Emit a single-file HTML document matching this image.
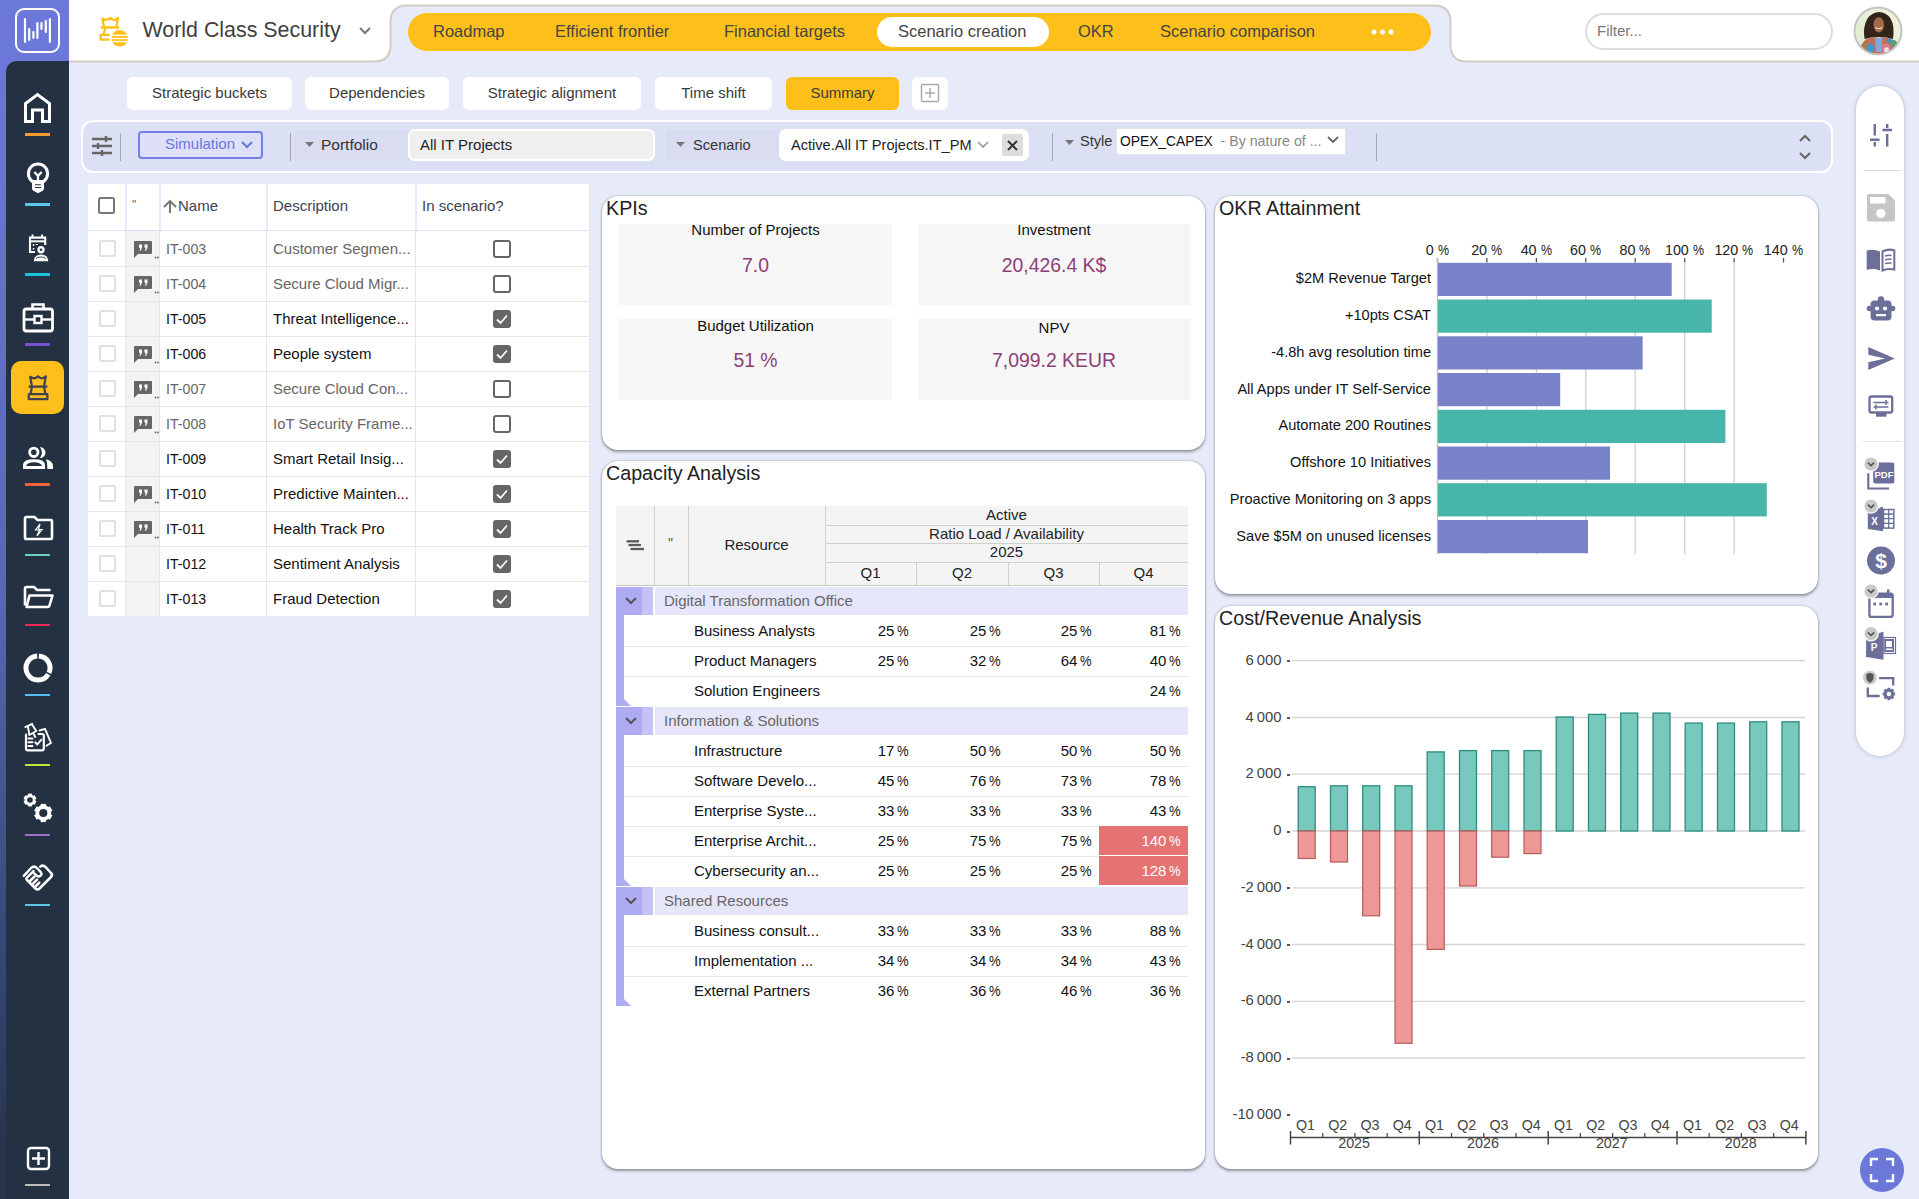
<!DOCTYPE html>
<html><head><meta charset="utf-8">
<style>
*{box-sizing:border-box;margin:0;padding:0}
html,body{width:1919px;height:1199px;overflow:hidden}
body{background:#e7eaf9;font-family:"Liberation Sans",sans-serif;color:#333;position:relative}
.a{position:absolute}
.c{display:flex;align-items:center;justify-content:center}
#sbL{left:0;top:0;width:69px;height:1199px;background:linear-gradient(#6b77d9 0,#6b77d9 61px,#6470c8 300px,#5a66b0 600px,#3d4b7c 900px,#34426e 1000px,#2b3a58 1100px,#27344a 1150px)}
#sbD{left:6px;top:61px;width:63px;height:1138px;background:#243142;border-top-left-radius:11px}
.und{position:absolute;left:28px;width:21px;height:3px;border-radius:1px}
.tab{position:absolute;top:12.3px;height:38px;font-size:16.5px;color:#444;line-height:38px}
.sub{position:absolute;top:77px;height:33px;background:#fff;border-radius:6px;font-size:15px;color:#3a3a3a;display:flex;align-items:center;justify-content:center;padding-bottom:2px}

.hd{font-size:15px;line-height:20px;color:#3d4252;white-space:nowrap}
.rt{font-size:15px;line-height:20px;white-space:nowrap}

.card{background:#fff;border-radius:16px;box-shadow:0 1.2px 3px rgba(0,0,0,.36),0 0 2px rgba(0,0,0,.22)}
.ctitle{font-size:19.7px;line-height:24px;color:#222;white-space:nowrap}
.kl{font-size:15px;line-height:20px;color:#111;text-align:center;white-space:nowrap}
.kv{font-size:19.4px;line-height:24px;color:#8e3f78;text-align:center;white-space:nowrap}
.th{font-size:15px;line-height:20px;color:#222;text-align:center;white-space:nowrap}
.gt{font-size:15px;line-height:20px;color:#666;white-space:nowrap}
.pcw{display:inline-block;width:11.6px;text-align:left}.pc{display:inline-block;transform:scaleX(.87);transform-origin:0 0}

.ax{font-size:14.3px;line-height:20px;color:#222;white-space:nowrap}
</style></head><body>
<!-- left sidebar -->
<div id="sbL" class="a"></div>
<div id="sbD" class="a"></div>
<div class="a" style="left:15px;top:8px;width:45px;height:45px;border:2.5px solid #fff;border-radius:9px"></div>
<svg class="a" style="left:0;top:0" width="69" height="60"><g stroke="#fff" stroke-width="2.2" stroke-linecap="round">
<line x1="25" y1="19" x2="25" y2="42"/><line x1="29.2" y1="29" x2="29.2" y2="40"/><line x1="33.4" y1="32" x2="33.4" y2="38"/><line x1="37.4" y1="23" x2="37.4" y2="38"/><line x1="41.5" y1="23" x2="41.5" y2="29"/><line x1="45.8" y1="21" x2="45.8" y2="32"/><line x1="49.9" y1="19" x2="49.9" y2="42"/></g></svg>

<!-- header -->
<div class="a" style="left:69px;top:0;width:1850px;height:61px;background:#fff"></div>
<svg class="a" style="left:0;top:0" width="1919" height="70">
<path d="M374,61.5 Q390.5,61.5 390.5,45 V22 Q390.5,5.5 407,5.5 H1434 Q1450.5,5.5 1450.5,22 V45 Q1450.5,61.5 1467,61.5 Z" fill="#e7eaf9"/>
<path d="M69,61.5 H374 Q390.5,61.5 390.5,45 V22 Q390.5,5.5 407,5.5 H1434 Q1450.5,5.5 1450.5,22 V45 Q1450.5,61.5 1467,61.5 H1919" fill="none" stroke="#d2ccc4" stroke-width="2"/>
</svg>
<!-- title -->
<svg class="a" style="left:96px;top:14px" width="36" height="36" viewBox="0 0 36 36">
<g fill="none" stroke="#fdc01b" stroke-width="2.3" stroke-linejoin="round"><path d="M6.2,3.9 Q10.2,7.8 14.2,3.9 Q18,7.8 21.9,3.9 L20.3,13.5 M6.2,3.9 L8.2,13.5 M4.8,13.5 H23.2 M9.4,14 L7.3,20.8 M13.8,20.8 H4.6 V25.6 H13.8"/></g>
<circle cx="23.7" cy="24.3" r="8.3" fill="#fdc01b"/><g stroke="#fff" stroke-width="1.3"><line x1="16.5" y1="21.3" x2="30.9" y2="21.3"/><line x1="15.6" y1="24.5" x2="31.8" y2="24.5"/><line x1="16.5" y1="27.6" x2="30.9" y2="27.6"/></g>
</svg>
<div class="a" style="left:142.5px;top:16px;font-size:21.4px;color:#404040;line-height:28px;white-space:nowrap">World Class Security</div>
<svg class="a" style="left:358px;top:26px" width="14" height="10"><path d="M2,2 L7,7 L12,2" fill="none" stroke="#777" stroke-width="2"/></svg>

<!-- tabs -->
<div class="a" style="left:408px;top:13px;width:1023px;height:38px;background:#fdc01b;border-radius:19px"></div>
<div class="a" style="left:877px;top:17px;width:172px;height:30px;background:#fff;border-radius:15px"></div>
<div class="tab" style="left:433px">Roadmap</div>
<div class="tab" style="left:555px">Efficient frontier</div>
<div class="tab" style="left:724px">Financial targets</div>
<div class="tab" style="left:898px">Scenario creation</div>
<div class="tab" style="left:1078px">OKR</div>
<div class="tab" style="left:1160px">Scenario comparison</div>
<svg class="a" style="left:1370px;top:27px" width="26" height="10"><circle cx="4" cy="5" r="2.5" fill="#fff"/><circle cx="12.5" cy="5" r="2.5" fill="#fff"/><circle cx="21" cy="5" r="2.5" fill="#fff"/></svg>

<!-- filter + avatar -->
<div class="a" style="left:1585px;top:13px;width:248px;height:37px;border:2px solid #ddd;border-radius:19px;background:#fff"></div>
<div class="a" style="left:1597px;top:21px;font-size:15px;color:#777;line-height:20px">Filter...</div>
<svg class="a" style="left:1853px;top:6px" width="50" height="50" viewBox="0 0 50 50"><defs><clipPath id="avc"><circle cx="25" cy="25" r="23"/></clipPath><linearGradient id="avg" x1="0" y1="1" x2="1" y2="0"><stop offset="0" stop-color="#d8ecd0"/><stop offset="1" stop-color="#f4f4dc"/></linearGradient></defs>
<g clip-path="url(#avc)"><rect width="50" height="50" fill="url(#avg)"/>
<path d="M11.5,33 Q9.5,21 14.5,12.5 Q19.5,6 26,6 Q33,6 37.5,12.5 Q42,20 40,33 Q33,31 26,31 Q18,31 11.5,33 Z" fill="#33241a"/>
<ellipse cx="25.8" cy="18.8" rx="5.3" ry="7.6" fill="#a36a48"/><path d="M22.5,21.5 Q25.8,24 29,21.5" stroke="#f0e0d0" stroke-width="1.2" fill="none"/>
<path d="M6,50 Q7,37 13.5,33 Q20,30 25.8,32 Q32,30 38.5,33 Q45,37 46,50 Z" fill="#c07058"/>
<path d="M22,32 L29.5,32 L28.5,46 L23,46 Z" fill="#82a8d8"/><ellipse cx="17.5" cy="42" rx="3.8" ry="4.6" fill="#3a9ad8"/><ellipse cx="33" cy="43" rx="4.5" ry="5.5" fill="#e07a9a"/><ellipse cx="33.5" cy="44" rx="2.3" ry="2.8" fill="#eee8d8"/><ellipse cx="40.5" cy="37.5" rx="3.5" ry="3.5" fill="#5aa070"/><ellipse cx="11.5" cy="41" rx="2.8" ry="4.5" fill="#b07a40"/><ellipse cx="36" cy="34.5" rx="2.5" ry="2" fill="#4a90c8"/></g>
<circle cx="25" cy="25" r="23.5" fill="none" stroke="#c4c4c4" stroke-width="2"/></svg>

<!-- subtabs -->
<div class="sub" style="left:127px;width:165px">Strategic buckets</div>
<div class="sub" style="left:305px;width:144px">Dependencies</div>
<div class="sub" style="left:463px;width:178px">Strategic alignment</div>
<div class="sub" style="left:655px;width:117px">Time shift</div>
<div class="sub" style="left:786px;width:113px;background:#fdc01b">Summary</div>
<div class="sub" style="left:912px;width:36px"><svg width="20" height="20"><rect x="1.5" y="1.5" width="17" height="17" fill="none" stroke="#aaa" stroke-width="1.5" rx="1"/><path d="M10,5 V15 M5,10 H15" stroke="#aaa" stroke-width="1.5"/></svg></div>


<!-- filter bar -->
<div class="a" style="left:81px;top:120px;width:1752px;height:53px;background:#dce0f5;border:2px solid #fff;border-radius:12px"></div>
<svg class="a" style="left:90px;top:134px" width="24" height="24" viewBox="0 0 24 24"><g stroke="#666" stroke-width="2.4" fill="none">
<path d="M2,5 H22 M2,12 H22 M2,19 H22"/></g><g stroke="#666" stroke-width="2.4"><path d="M16,2 V8 M8,9 V15 M12,16 V22"/></g></svg>
<div class="a" style="left:120px;top:133px;width:1px;height:28px;background:#a4a6b8"></div>
<div class="a" style="left:138px;top:131px;width:125px;height:28px;border:2px solid #7480e6;border-radius:4px;background:#dde0f8"></div>
<div class="a" style="left:165px;top:134px;font-size:15px;line-height:20px;color:#6b78da">Simulation</div>
<svg class="a" style="left:240px;top:140px" width="14" height="10"><path d="M2,2 L7,7 L12,2" fill="none" stroke="#6b78da" stroke-width="2"/></svg>
<div class="a" style="left:290px;top:133px;width:1px;height:28px;background:#a4a6b8"></div>
<div class="a" style="left:295px;top:131px;width:115px;height:29px;border:1px solid #d6d9ec;background:#dadcf2"></div>
<svg class="a" style="left:305px;top:142px" width="10" height="6"><path d="M0,0 H9 L4.5,5 Z" fill="#777"/></svg>
<div class="a" style="left:321px;top:135px;font-size:15.5px;line-height:20px;color:#333">Portfolio</div>
<div class="a" style="left:408px;top:129px;width:247px;height:32px;border:2px solid #fff;border-radius:7px;background:#efefef"></div>
<div class="a" style="left:420px;top:135px;font-size:15px;line-height:20px;color:#222">All IT Projects</div>

<div class="a" style="left:667px;top:131px;width:113px;height:29px;border:1px solid #d6d9ec;background:#dadcf2"></div>
<svg class="a" style="left:676px;top:142px" width="10" height="6"><path d="M0,0 H9 L4.5,5 Z" fill="#777"/></svg>
<div class="a" style="left:693px;top:135px;font-size:14.6px;line-height:20px;color:#333">Scenario</div>
<div class="a" style="left:779px;top:129px;width:250px;height:32px;border-radius:7px;background:#fff"></div>
<div class="a" style="left:791px;top:135px;font-size:14.6px;line-height:20px;color:#222;width:182px;overflow:hidden;white-space:nowrap">Active.All IT Projects.IT_PM</div>
<svg class="a" style="left:976px;top:140px" width="14" height="10"><path d="M2,2 L7,7 L12,2" fill="none" stroke="#999" stroke-width="1.6"/></svg>
<div class="a" style="left:1002px;top:134px;width:21px;height:22px;background:#ddd;border-radius:2px"></div>
<svg class="a" style="left:1006px;top:139px" width="13" height="13"><path d="M2,2 L11,11 M11,2 L2,11" stroke="#333" stroke-width="2"/></svg>
<div class="a" style="left:1052px;top:133px;width:1px;height:28px;background:#a4a6b8"></div>
<svg class="a" style="left:1065px;top:140px" width="10" height="6"><path d="M0,0 H9 L4.5,5 Z" fill="#777"/></svg>
<div class="a" style="left:1080px;top:131px;font-size:14.6px;line-height:20px;color:#333">Style</div>
<div class="a" style="left:1116px;top:128px;width:230px;height:27px;border:1px solid #e4e4e4;background:#fff"></div>
<div class="a" style="left:1120px;top:131px;font-size:13.8px;line-height:20px;color:#111;white-space:nowrap">OPEX_CAPEX <span style="color:#888;font-size:14.2px">&nbsp;- By nature of ...</span></div>
<svg class="a" style="left:1326px;top:135px" width="14" height="10"><path d="M2,2 L7,7 L12,2" fill="none" stroke="#666" stroke-width="1.8"/></svg>
<div class="a" style="left:1376px;top:133px;width:1px;height:28px;background:#a4a6b8"></div>
<svg class="a" style="left:1797px;top:133px" width="16" height="28"><path d="M3,8 L8,3 L13,8 M3,20 L8,25 L13,20" fill="none" stroke="#666" stroke-width="2"/></svg>

<div class="a" style="left:88px;top:184px;width:501px;height:47px;background:#fff"></div>
<div class="a" style="left:88px;top:230px;width:501px;height:1.5px;background:#dfe3f8"></div>
<div class="a" style="left:125px;top:184px;width:1.5px;height:46px;background:#e6e9fb"></div>
<div class="a" style="left:159px;top:184px;width:1.5px;height:46px;background:#e6e9fb"></div>
<div class="a" style="left:266px;top:184px;width:1.5px;height:46px;background:#e6e9fb"></div>
<div class="a" style="left:415px;top:184px;width:1.5px;height:46px;background:#e6e9fb"></div>
<div class="a" style="left:98px;top:197px;width:17px;height:17px;border:2.5px solid #777;border-radius:2.5px"></div>
<div class="a" style="left:132px;top:199px;font-size:12px;line-height:12px;color:#667">"</div>
<svg class="a" style="left:162px;top:198px" width="16" height="16"><path d="M8,15 V3 M2,9 L8,3 L14,9" fill="none" stroke="#777" stroke-width="2"/></svg>
<div class="a hd" style="left:178px;top:196px">Name</div>
<div class="a hd" style="left:273px;top:196px">Description</div>
<div class="a hd" style="left:422px;top:196px">In scenario?</div>
<div class="a" style="left:88px;top:231px;width:501px;height:385px;background:#fff"></div>
<div class="a" style="left:125px;top:231px;width:34px;height:385px;background:#f3f3f3"></div>
<div class="a" style="left:99px;top:240px;width:17px;height:17px;border:2px solid #e0e0e0;border-radius:2px"></div>
<svg class="a" style="left:133px;top:240px" width="26" height="20" viewBox="0 0 26 20"><path d="M1.5,1 H18 Q19,1 19,2 V13 Q19,14 18,14 H5 L1,18 V2 Q1,1 2,1 Z" fill="#666"/><path d="M6,4.5 h3 v3.2 l-1.5,3 h-1 l0.8,-3 h-1.3 Z M11.5,4.5 h3 v3.2 l-1.5,3 h-1 l0.8,-3 h-1.3 Z" fill="#fff"/><circle cx="22.5" cy="17.5" r="0.9" fill="#666"/><circle cx="25" cy="17.5" r="0.9" fill="#666"/></svg>
<div class="a rt" style="left:166px;top:239px;color:#666;font-size:14.2px">IT-003</div>
<div class="a rt" style="left:273px;top:239px;color:#666">Customer Segmen...</div>
<div class="a" style="left:493px;top:240px;width:18px;height:18px;border:2.5px solid #666;border-radius:3px"></div>
<div class="a" style="left:88px;top:266px;width:501px;height:1.2px;background:#e6e6e6"></div>
<div class="a" style="left:99px;top:275px;width:17px;height:17px;border:2px solid #e0e0e0;border-radius:2px"></div>
<svg class="a" style="left:133px;top:275px" width="26" height="20" viewBox="0 0 26 20"><path d="M1.5,1 H18 Q19,1 19,2 V13 Q19,14 18,14 H5 L1,18 V2 Q1,1 2,1 Z" fill="#666"/><path d="M6,4.5 h3 v3.2 l-1.5,3 h-1 l0.8,-3 h-1.3 Z M11.5,4.5 h3 v3.2 l-1.5,3 h-1 l0.8,-3 h-1.3 Z" fill="#fff"/><circle cx="22.5" cy="17.5" r="0.9" fill="#666"/><circle cx="25" cy="17.5" r="0.9" fill="#666"/></svg>
<div class="a rt" style="left:166px;top:274px;color:#666;font-size:14.2px">IT-004</div>
<div class="a rt" style="left:273px;top:274px;color:#666">Secure Cloud Migr...</div>
<div class="a" style="left:493px;top:275px;width:18px;height:18px;border:2.5px solid #666;border-radius:3px"></div>
<div class="a" style="left:88px;top:301px;width:501px;height:1.2px;background:#e6e6e6"></div>
<div class="a" style="left:99px;top:310px;width:17px;height:17px;border:2px solid #e0e0e0;border-radius:2px"></div>
<div class="a rt" style="left:166px;top:309px;color:#111;font-size:14.2px">IT-005</div>
<div class="a rt" style="left:273px;top:309px;color:#111">Threat Intelligence...</div>
<svg class="a" style="left:493px;top:310px" width="18" height="18"><rect x="0" y="0" width="18" height="18" rx="3" fill="#666"/><path d="M4,9.5 L7.5,13 L14,5.5" fill="none" stroke="#fff" stroke-width="1.8"/></svg>
<div class="a" style="left:88px;top:336px;width:501px;height:1.2px;background:#e6e6e6"></div>
<div class="a" style="left:99px;top:345px;width:17px;height:17px;border:2px solid #e0e0e0;border-radius:2px"></div>
<svg class="a" style="left:133px;top:345px" width="26" height="20" viewBox="0 0 26 20"><path d="M1.5,1 H18 Q19,1 19,2 V13 Q19,14 18,14 H5 L1,18 V2 Q1,1 2,1 Z" fill="#666"/><path d="M6,4.5 h3 v3.2 l-1.5,3 h-1 l0.8,-3 h-1.3 Z M11.5,4.5 h3 v3.2 l-1.5,3 h-1 l0.8,-3 h-1.3 Z" fill="#fff"/><circle cx="22.5" cy="17.5" r="0.9" fill="#666"/><circle cx="25" cy="17.5" r="0.9" fill="#666"/></svg>
<div class="a rt" style="left:166px;top:344px;color:#111;font-size:14.2px">IT-006</div>
<div class="a rt" style="left:273px;top:344px;color:#111">People system</div>
<svg class="a" style="left:493px;top:345px" width="18" height="18"><rect x="0" y="0" width="18" height="18" rx="3" fill="#666"/><path d="M4,9.5 L7.5,13 L14,5.5" fill="none" stroke="#fff" stroke-width="1.8"/></svg>
<div class="a" style="left:88px;top:371px;width:501px;height:1.2px;background:#e6e6e6"></div>
<div class="a" style="left:99px;top:380px;width:17px;height:17px;border:2px solid #e0e0e0;border-radius:2px"></div>
<svg class="a" style="left:133px;top:380px" width="26" height="20" viewBox="0 0 26 20"><path d="M1.5,1 H18 Q19,1 19,2 V13 Q19,14 18,14 H5 L1,18 V2 Q1,1 2,1 Z" fill="#666"/><path d="M6,4.5 h3 v3.2 l-1.5,3 h-1 l0.8,-3 h-1.3 Z M11.5,4.5 h3 v3.2 l-1.5,3 h-1 l0.8,-3 h-1.3 Z" fill="#fff"/><circle cx="22.5" cy="17.5" r="0.9" fill="#666"/><circle cx="25" cy="17.5" r="0.9" fill="#666"/></svg>
<div class="a rt" style="left:166px;top:379px;color:#666;font-size:14.2px">IT-007</div>
<div class="a rt" style="left:273px;top:379px;color:#666">Secure Cloud Con...</div>
<div class="a" style="left:493px;top:380px;width:18px;height:18px;border:2.5px solid #666;border-radius:3px"></div>
<div class="a" style="left:88px;top:406px;width:501px;height:1.2px;background:#e6e6e6"></div>
<div class="a" style="left:99px;top:415px;width:17px;height:17px;border:2px solid #e0e0e0;border-radius:2px"></div>
<svg class="a" style="left:133px;top:415px" width="26" height="20" viewBox="0 0 26 20"><path d="M1.5,1 H18 Q19,1 19,2 V13 Q19,14 18,14 H5 L1,18 V2 Q1,1 2,1 Z" fill="#666"/><path d="M6,4.5 h3 v3.2 l-1.5,3 h-1 l0.8,-3 h-1.3 Z M11.5,4.5 h3 v3.2 l-1.5,3 h-1 l0.8,-3 h-1.3 Z" fill="#fff"/><circle cx="22.5" cy="17.5" r="0.9" fill="#666"/><circle cx="25" cy="17.5" r="0.9" fill="#666"/></svg>
<div class="a rt" style="left:166px;top:414px;color:#666;font-size:14.2px">IT-008</div>
<div class="a rt" style="left:273px;top:414px;color:#666">IoT Security Frame...</div>
<div class="a" style="left:493px;top:415px;width:18px;height:18px;border:2.5px solid #666;border-radius:3px"></div>
<div class="a" style="left:88px;top:441px;width:501px;height:1.2px;background:#e6e6e6"></div>
<div class="a" style="left:99px;top:450px;width:17px;height:17px;border:2px solid #e0e0e0;border-radius:2px"></div>
<div class="a rt" style="left:166px;top:449px;color:#111;font-size:14.2px">IT-009</div>
<div class="a rt" style="left:273px;top:449px;color:#111">Smart Retail Insig...</div>
<svg class="a" style="left:493px;top:450px" width="18" height="18"><rect x="0" y="0" width="18" height="18" rx="3" fill="#666"/><path d="M4,9.5 L7.5,13 L14,5.5" fill="none" stroke="#fff" stroke-width="1.8"/></svg>
<div class="a" style="left:88px;top:476px;width:501px;height:1.2px;background:#e6e6e6"></div>
<div class="a" style="left:99px;top:485px;width:17px;height:17px;border:2px solid #e0e0e0;border-radius:2px"></div>
<svg class="a" style="left:133px;top:485px" width="26" height="20" viewBox="0 0 26 20"><path d="M1.5,1 H18 Q19,1 19,2 V13 Q19,14 18,14 H5 L1,18 V2 Q1,1 2,1 Z" fill="#666"/><path d="M6,4.5 h3 v3.2 l-1.5,3 h-1 l0.8,-3 h-1.3 Z M11.5,4.5 h3 v3.2 l-1.5,3 h-1 l0.8,-3 h-1.3 Z" fill="#fff"/><circle cx="22.5" cy="17.5" r="0.9" fill="#666"/><circle cx="25" cy="17.5" r="0.9" fill="#666"/></svg>
<div class="a rt" style="left:166px;top:484px;color:#111;font-size:14.2px">IT-010</div>
<div class="a rt" style="left:273px;top:484px;color:#111">Predictive Mainten...</div>
<svg class="a" style="left:493px;top:485px" width="18" height="18"><rect x="0" y="0" width="18" height="18" rx="3" fill="#666"/><path d="M4,9.5 L7.5,13 L14,5.5" fill="none" stroke="#fff" stroke-width="1.8"/></svg>
<div class="a" style="left:88px;top:511px;width:501px;height:1.2px;background:#e6e6e6"></div>
<div class="a" style="left:99px;top:520px;width:17px;height:17px;border:2px solid #e0e0e0;border-radius:2px"></div>
<svg class="a" style="left:133px;top:520px" width="26" height="20" viewBox="0 0 26 20"><path d="M1.5,1 H18 Q19,1 19,2 V13 Q19,14 18,14 H5 L1,18 V2 Q1,1 2,1 Z" fill="#666"/><path d="M6,4.5 h3 v3.2 l-1.5,3 h-1 l0.8,-3 h-1.3 Z M11.5,4.5 h3 v3.2 l-1.5,3 h-1 l0.8,-3 h-1.3 Z" fill="#fff"/><circle cx="22.5" cy="17.5" r="0.9" fill="#666"/><circle cx="25" cy="17.5" r="0.9" fill="#666"/></svg>
<div class="a rt" style="left:166px;top:519px;color:#111;font-size:14.2px">IT-011</div>
<div class="a rt" style="left:273px;top:519px;color:#111">Health Track Pro</div>
<svg class="a" style="left:493px;top:520px" width="18" height="18"><rect x="0" y="0" width="18" height="18" rx="3" fill="#666"/><path d="M4,9.5 L7.5,13 L14,5.5" fill="none" stroke="#fff" stroke-width="1.8"/></svg>
<div class="a" style="left:88px;top:546px;width:501px;height:1.2px;background:#e6e6e6"></div>
<div class="a" style="left:99px;top:555px;width:17px;height:17px;border:2px solid #e0e0e0;border-radius:2px"></div>
<div class="a rt" style="left:166px;top:554px;color:#111;font-size:14.2px">IT-012</div>
<div class="a rt" style="left:273px;top:554px;color:#111">Sentiment Analysis</div>
<svg class="a" style="left:493px;top:555px" width="18" height="18"><rect x="0" y="0" width="18" height="18" rx="3" fill="#666"/><path d="M4,9.5 L7.5,13 L14,5.5" fill="none" stroke="#fff" stroke-width="1.8"/></svg>
<div class="a" style="left:88px;top:581px;width:501px;height:1.2px;background:#e6e6e6"></div>
<div class="a" style="left:99px;top:590px;width:17px;height:17px;border:2px solid #e0e0e0;border-radius:2px"></div>
<div class="a rt" style="left:166px;top:589px;color:#111;font-size:14.2px">IT-013</div>
<div class="a rt" style="left:273px;top:589px;color:#111">Fraud Detection</div>
<svg class="a" style="left:493px;top:590px" width="18" height="18"><rect x="0" y="0" width="18" height="18" rx="3" fill="#666"/><path d="M4,9.5 L7.5,13 L14,5.5" fill="none" stroke="#fff" stroke-width="1.8"/></svg>
<div class="a" style="left:125px;top:231px;width:1.2px;height:385px;background:#e6e6e6"></div>
<div class="a" style="left:159px;top:231px;width:1.2px;height:385px;background:#e6e6e6"></div>
<div class="a" style="left:266px;top:231px;width:1.2px;height:385px;background:#e6e6e6"></div>
<div class="a" style="left:415px;top:231px;width:1.2px;height:385px;background:#e6e6e6"></div>
<div class="a card" style="left:602px;top:196px;width:603px;height:254px"></div>
<div class="a ctitle" style="left:606px;top:195.8px">KPIs</div>
<div class="a card" style="left:602px;top:461px;width:603px;height:708px"></div>
<div class="a ctitle" style="left:606px;top:460.8px">Capacity Analysis</div>
<div class="a card" style="left:1215px;top:196px;width:603px;height:398px"></div>
<div class="a ctitle" style="left:1219px;top:195.8px">OKR Attainment</div>
<div class="a card" style="left:1215px;top:606px;width:603px;height:563px"></div>
<div class="a ctitle" style="left:1219px;top:605.8px">Cost/Revenue Analysis</div>
<div class="a" style="left:619px;top:224px;width:273px;height:81px;background:#f6f6f6"></div>
<div class="a kl" style="left:619px;top:220px;width:273px">Number of Projects</div>
<div class="a kv" style="left:619px;top:253px;width:273px">7.0</div>
<div class="a" style="left:918px;top:224px;width:272px;height:81px;background:#f6f6f6"></div>
<div class="a kl" style="left:918px;top:220px;width:272px">Investment</div>
<div class="a kv" style="left:918px;top:253px;width:272px">20,426.4 K$</div>
<div class="a" style="left:619px;top:319px;width:273px;height:81px;background:#f6f6f6"></div>
<div class="a kl" style="left:619px;top:316px;width:273px">Budget Utilization</div>
<div class="a kv" style="left:619px;top:348px;width:273px">51 %</div>
<div class="a" style="left:918px;top:319px;width:272px;height:81px;background:#f6f6f6"></div>
<div class="a kl" style="left:918px;top:318px;width:272px">NPV</div>
<div class="a kv" style="left:918px;top:348px;width:272px">7,099.2 KEUR</div>
<div class="a" style="left:616px;top:506px;width:572px;height:80px;background:#f4f4f4"></div>
<div class="a" style="left:616px;top:584.5px;width:572px;height:1.5px;background:#c8c8c8"></div>
<div class="a" style="left:654px;top:506px;width:1.2px;height:79px;background:#cfcfcf"></div>
<div class="a" style="left:688px;top:506px;width:1.2px;height:79px;background:#cfcfcf"></div>
<div class="a" style="left:825px;top:506px;width:1.2px;height:79px;background:#cfcfcf"></div>
<div class="a" style="left:825px;top:525px;width:363px;height:1.2px;background:#cfcfcf"></div>
<div class="a" style="left:825px;top:543px;width:363px;height:1.2px;background:#cfcfcf"></div>
<div class="a" style="left:825px;top:562px;width:363px;height:1.2px;background:#cfcfcf"></div>
<div class="a" style="left:916px;top:562px;width:1.2px;height:23px;background:#cfcfcf"></div>
<div class="a" style="left:1008px;top:562px;width:1.2px;height:23px;background:#cfcfcf"></div>
<div class="a" style="left:1099px;top:562px;width:1.2px;height:23px;background:#cfcfcf"></div>
<svg class="a" style="left:625px;top:539px" width="22" height="14"><g stroke="#5a5a5a" stroke-width="2.3"><line x1="1.5" y1="2.3" x2="14" y2="2.3"/><line x1="3.5" y1="6" x2="16" y2="6"/><line x1="5.5" y1="10" x2="19" y2="10"/></g></svg>
<div class="a" style="left:668px;top:536px;font-size:14px;line-height:14px;color:#555">"</div>
<div class="a th" style="left:688px;width:137px;top:535px">Resource</div>
<div class="a th" style="left:825px;width:363px;top:505px">Active</div>
<div class="a th" style="left:825px;width:363px;top:524px">Ratio Load / Availability</div>
<div class="a th" style="left:825px;width:363px;top:542px">2025</div>
<div class="a th" style="left:825px;width:91px;top:563px">Q1</div>
<div class="a th" style="left:916px;width:92px;top:563px">Q2</div>
<div class="a th" style="left:1008px;width:91px;top:563px">Q3</div>
<div class="a th" style="left:1099px;width:89px;top:563px">Q4</div>
<div class="a" style="left:616px;top:587px;width:572px;height:28px;background:#e6e6fb"></div>
<div class="a" style="left:616px;top:587px;width:26px;height:28px;background:#aeabf2"></div>
<div class="a" style="left:642px;top:587px;width:11px;height:28px;background:#c5c3f6"></div>
<div class="a" style="left:653px;top:587px;width:1.5px;height:28px;background:#fff"></div>
<svg class="a" style="left:624px;top:596px" width="14" height="10"><path d="M2,2 L7,7 L12,2" fill="none" stroke="#555" stroke-width="2"/></svg>
<div class="a gt" style="left:664px;top:591px">Digital Transformation Office</div>
<div class="a" style="left:624px;top:615px;width:564px;height:91px;background:#fff"></div>
<svg class="a" style="left:616px;top:615px" width="20" height="91"><path d="M0,0 H8 V84 L15,91 H0 Z" fill="#aeabf2"/></svg>
<div class="a" style="left:624px;top:646px;width:564px;height:1.2px;background:#e8e8e8"></div>
<div class="a rt" style="left:694px;top:621px;color:#111">Business Analysts</div>
<div class="a rt" style="left:825px;top:621px;width:84px;text-align:right;color:#111">25&#8201;<span class="pcw"><span class="pc">%</span></span></div>
<div class="a rt" style="left:916px;top:621px;width:85px;text-align:right;color:#111">25&#8201;<span class="pcw"><span class="pc">%</span></span></div>
<div class="a rt" style="left:1008px;top:621px;width:84px;text-align:right;color:#111">25&#8201;<span class="pcw"><span class="pc">%</span></span></div>
<div class="a rt" style="left:1099px;top:621px;width:82px;text-align:right;color:#111">81&#8201;<span class="pcw"><span class="pc">%</span></span></div>
<div class="a" style="left:624px;top:676px;width:564px;height:1.2px;background:#e8e8e8"></div>
<div class="a rt" style="left:694px;top:651px;color:#111">Product Managers</div>
<div class="a rt" style="left:825px;top:651px;width:84px;text-align:right;color:#111">25&#8201;<span class="pcw"><span class="pc">%</span></span></div>
<div class="a rt" style="left:916px;top:651px;width:85px;text-align:right;color:#111">32&#8201;<span class="pcw"><span class="pc">%</span></span></div>
<div class="a rt" style="left:1008px;top:651px;width:84px;text-align:right;color:#111">64&#8201;<span class="pcw"><span class="pc">%</span></span></div>
<div class="a rt" style="left:1099px;top:651px;width:82px;text-align:right;color:#111">40&#8201;<span class="pcw"><span class="pc">%</span></span></div>
<div class="a rt" style="left:694px;top:681px;color:#111">Solution Engineers</div>
<div class="a rt" style="left:1099px;top:681px;width:82px;text-align:right;color:#111">24&#8201;<span class="pcw"><span class="pc">%</span></span></div>
<div class="a" style="left:616px;top:707px;width:572px;height:28px;background:#e6e6fb"></div>
<div class="a" style="left:616px;top:707px;width:26px;height:28px;background:#aeabf2"></div>
<div class="a" style="left:642px;top:707px;width:11px;height:28px;background:#c5c3f6"></div>
<div class="a" style="left:653px;top:707px;width:1.5px;height:28px;background:#fff"></div>
<svg class="a" style="left:624px;top:716px" width="14" height="10"><path d="M2,2 L7,7 L12,2" fill="none" stroke="#555" stroke-width="2"/></svg>
<div class="a gt" style="left:664px;top:711px">Information &amp; Solutions</div>
<div class="a" style="left:624px;top:735px;width:564px;height:151px;background:#fff"></div>
<svg class="a" style="left:616px;top:735px" width="20" height="151"><path d="M0,0 H8 V144 L15,151 H0 Z" fill="#aeabf2"/></svg>
<div class="a" style="left:624px;top:766px;width:564px;height:1.2px;background:#e8e8e8"></div>
<div class="a rt" style="left:694px;top:741px;color:#111">Infrastructure</div>
<div class="a rt" style="left:825px;top:741px;width:84px;text-align:right;color:#111">17&#8201;<span class="pcw"><span class="pc">%</span></span></div>
<div class="a rt" style="left:916px;top:741px;width:85px;text-align:right;color:#111">50&#8201;<span class="pcw"><span class="pc">%</span></span></div>
<div class="a rt" style="left:1008px;top:741px;width:84px;text-align:right;color:#111">50&#8201;<span class="pcw"><span class="pc">%</span></span></div>
<div class="a rt" style="left:1099px;top:741px;width:82px;text-align:right;color:#111">50&#8201;<span class="pcw"><span class="pc">%</span></span></div>
<div class="a" style="left:624px;top:796px;width:564px;height:1.2px;background:#e8e8e8"></div>
<div class="a rt" style="left:694px;top:771px;color:#111">Software Develo...</div>
<div class="a rt" style="left:825px;top:771px;width:84px;text-align:right;color:#111">45&#8201;<span class="pcw"><span class="pc">%</span></span></div>
<div class="a rt" style="left:916px;top:771px;width:85px;text-align:right;color:#111">76&#8201;<span class="pcw"><span class="pc">%</span></span></div>
<div class="a rt" style="left:1008px;top:771px;width:84px;text-align:right;color:#111">73&#8201;<span class="pcw"><span class="pc">%</span></span></div>
<div class="a rt" style="left:1099px;top:771px;width:82px;text-align:right;color:#111">78&#8201;<span class="pcw"><span class="pc">%</span></span></div>
<div class="a" style="left:624px;top:826px;width:564px;height:1.2px;background:#e8e8e8"></div>
<div class="a rt" style="left:694px;top:801px;color:#111">Enterprise Syste...</div>
<div class="a rt" style="left:825px;top:801px;width:84px;text-align:right;color:#111">33&#8201;<span class="pcw"><span class="pc">%</span></span></div>
<div class="a rt" style="left:916px;top:801px;width:85px;text-align:right;color:#111">33&#8201;<span class="pcw"><span class="pc">%</span></span></div>
<div class="a rt" style="left:1008px;top:801px;width:84px;text-align:right;color:#111">33&#8201;<span class="pcw"><span class="pc">%</span></span></div>
<div class="a rt" style="left:1099px;top:801px;width:82px;text-align:right;color:#111">43&#8201;<span class="pcw"><span class="pc">%</span></span></div>
<div class="a" style="left:624px;top:856px;width:564px;height:1.2px;background:#e8e8e8"></div>
<div class="a rt" style="left:694px;top:831px;color:#111">Enterprise Archit...</div>
<div class="a rt" style="left:825px;top:831px;width:84px;text-align:right;color:#111">25&#8201;<span class="pcw"><span class="pc">%</span></span></div>
<div class="a rt" style="left:916px;top:831px;width:85px;text-align:right;color:#111">75&#8201;<span class="pcw"><span class="pc">%</span></span></div>
<div class="a rt" style="left:1008px;top:831px;width:84px;text-align:right;color:#111">75&#8201;<span class="pcw"><span class="pc">%</span></span></div>
<div class="a" style="left:1099px;top:826px;width:89px;height:29px;background:#e57373"></div>
<div class="a rt" style="left:1099px;top:831px;width:82px;text-align:right;color:#fff">140&#8201;<span class="pcw"><span class="pc">%</span></span></div>
<div class="a rt" style="left:694px;top:861px;color:#111">Cybersecurity an...</div>
<div class="a rt" style="left:825px;top:861px;width:84px;text-align:right;color:#111">25&#8201;<span class="pcw"><span class="pc">%</span></span></div>
<div class="a rt" style="left:916px;top:861px;width:85px;text-align:right;color:#111">25&#8201;<span class="pcw"><span class="pc">%</span></span></div>
<div class="a rt" style="left:1008px;top:861px;width:84px;text-align:right;color:#111">25&#8201;<span class="pcw"><span class="pc">%</span></span></div>
<div class="a" style="left:1099px;top:856px;width:89px;height:29px;background:#e57373"></div>
<div class="a rt" style="left:1099px;top:861px;width:82px;text-align:right;color:#fff">128&#8201;<span class="pcw"><span class="pc">%</span></span></div>
<div class="a" style="left:616px;top:887px;width:572px;height:28px;background:#e6e6fb"></div>
<div class="a" style="left:616px;top:887px;width:26px;height:28px;background:#aeabf2"></div>
<div class="a" style="left:642px;top:887px;width:11px;height:28px;background:#c5c3f6"></div>
<div class="a" style="left:653px;top:887px;width:1.5px;height:28px;background:#fff"></div>
<svg class="a" style="left:624px;top:896px" width="14" height="10"><path d="M2,2 L7,7 L12,2" fill="none" stroke="#555" stroke-width="2"/></svg>
<div class="a gt" style="left:664px;top:891px">Shared Resources</div>
<div class="a" style="left:624px;top:915px;width:564px;height:91px;background:#fff"></div>
<svg class="a" style="left:616px;top:915px" width="20" height="91"><path d="M0,0 H8 V84 L15,91 H0 Z" fill="#aeabf2"/></svg>
<div class="a" style="left:624px;top:946px;width:564px;height:1.2px;background:#e8e8e8"></div>
<div class="a rt" style="left:694px;top:921px;color:#111">Business consult...</div>
<div class="a rt" style="left:825px;top:921px;width:84px;text-align:right;color:#111">33&#8201;<span class="pcw"><span class="pc">%</span></span></div>
<div class="a rt" style="left:916px;top:921px;width:85px;text-align:right;color:#111">33&#8201;<span class="pcw"><span class="pc">%</span></span></div>
<div class="a rt" style="left:1008px;top:921px;width:84px;text-align:right;color:#111">33&#8201;<span class="pcw"><span class="pc">%</span></span></div>
<div class="a rt" style="left:1099px;top:921px;width:82px;text-align:right;color:#111">88&#8201;<span class="pcw"><span class="pc">%</span></span></div>
<div class="a" style="left:624px;top:976px;width:564px;height:1.2px;background:#e8e8e8"></div>
<div class="a rt" style="left:694px;top:951px;color:#111">Implementation ...</div>
<div class="a rt" style="left:825px;top:951px;width:84px;text-align:right;color:#111">34&#8201;<span class="pcw"><span class="pc">%</span></span></div>
<div class="a rt" style="left:916px;top:951px;width:85px;text-align:right;color:#111">34&#8201;<span class="pcw"><span class="pc">%</span></span></div>
<div class="a rt" style="left:1008px;top:951px;width:84px;text-align:right;color:#111">34&#8201;<span class="pcw"><span class="pc">%</span></span></div>
<div class="a rt" style="left:1099px;top:951px;width:82px;text-align:right;color:#111">43&#8201;<span class="pcw"><span class="pc">%</span></span></div>
<div class="a rt" style="left:694px;top:981px;color:#111">External Partners</div>
<div class="a rt" style="left:825px;top:981px;width:84px;text-align:right;color:#111">36&#8201;<span class="pcw"><span class="pc">%</span></span></div>
<div class="a rt" style="left:916px;top:981px;width:85px;text-align:right;color:#111">36&#8201;<span class="pcw"><span class="pc">%</span></span></div>
<div class="a rt" style="left:1008px;top:981px;width:84px;text-align:right;color:#111">46&#8201;<span class="pcw"><span class="pc">%</span></span></div>
<div class="a rt" style="left:1099px;top:981px;width:82px;text-align:right;color:#111">36&#8201;<span class="pcw"><span class="pc">%</span></span></div>
<svg class="a" style="left:1215px;top:196px" width="603" height="398" viewBox="1215 196 603 398"><line x1="1437.5" y1="258" x2="1437.5" y2="262.5" stroke="#555" stroke-width="1.3"/><line x1="1486.9" y1="258" x2="1486.9" y2="262.5" stroke="#555" stroke-width="1.3"/><line x1="1486.9" y1="262.5" x2="1486.9" y2="554" stroke="#cfcfcf" stroke-width="1.3"/><line x1="1536.4" y1="258" x2="1536.4" y2="262.5" stroke="#555" stroke-width="1.3"/><line x1="1536.4" y1="262.5" x2="1536.4" y2="554" stroke="#cfcfcf" stroke-width="1.3"/><line x1="1585.8" y1="258" x2="1585.8" y2="262.5" stroke="#555" stroke-width="1.3"/><line x1="1585.8" y1="262.5" x2="1585.8" y2="554" stroke="#cfcfcf" stroke-width="1.3"/><line x1="1635.2" y1="258" x2="1635.2" y2="262.5" stroke="#555" stroke-width="1.3"/><line x1="1635.2" y1="262.5" x2="1635.2" y2="554" stroke="#cfcfcf" stroke-width="1.3"/><line x1="1684.7" y1="258" x2="1684.7" y2="262.5" stroke="#555" stroke-width="1.3"/><line x1="1684.7" y1="262.5" x2="1684.7" y2="554" stroke="#cfcfcf" stroke-width="1.3"/><line x1="1734.1" y1="258" x2="1734.1" y2="262.5" stroke="#555" stroke-width="1.3"/><line x1="1734.1" y1="262.5" x2="1734.1" y2="554" stroke="#cfcfcf" stroke-width="1.3"/><line x1="1783.5" y1="258" x2="1783.5" y2="262.5" stroke="#555" stroke-width="1.3"/><line x1="1437.5" y1="258" x2="1437.5" y2="554" stroke="#bbb" stroke-width="1.3"/><rect x="1438.0" y="262.8" width="233.7" height="33.2" fill="#7882c8"/><rect x="1438.0" y="299.5" width="273.7" height="33.2" fill="#48b5aa"/><rect x="1438.0" y="336.3" width="204.6" height="33.2" fill="#7882c8"/><rect x="1438.0" y="373.0" width="122.2" height="33.2" fill="#7882c8"/><rect x="1438.0" y="409.8" width="287.4" height="33.2" fill="#48b5aa"/><rect x="1438.0" y="446.5" width="172.0" height="33.2" fill="#7882c8"/><rect x="1438.0" y="483.2" width="328.8" height="33.2" fill="#48b5aa"/><rect x="1438.0" y="520.0" width="150.0" height="33.2" fill="#7882c8"/></svg>
<div class="a ax" style="left:1407.5px;top:240px;width:60px;text-align:center">0 <span class="pcw"><span class="pc">%</span></span></div>
<div class="a ax" style="left:1456.9px;top:240px;width:60px;text-align:center">20 <span class="pcw"><span class="pc">%</span></span></div>
<div class="a ax" style="left:1506.4px;top:240px;width:60px;text-align:center">40 <span class="pcw"><span class="pc">%</span></span></div>
<div class="a ax" style="left:1555.8px;top:240px;width:60px;text-align:center">60 <span class="pcw"><span class="pc">%</span></span></div>
<div class="a ax" style="left:1605.2px;top:240px;width:60px;text-align:center">80 <span class="pcw"><span class="pc">%</span></span></div>
<div class="a ax" style="left:1654.7px;top:240px;width:60px;text-align:center">100 <span class="pcw"><span class="pc">%</span></span></div>
<div class="a ax" style="left:1704.1px;top:240px;width:60px;text-align:center">120 <span class="pcw"><span class="pc">%</span></span></div>
<div class="a ax" style="left:1753.5px;top:240px;width:60px;text-align:center">140 <span class="pcw"><span class="pc">%</span></span></div>
<div class="a rt" style="left:1215px;top:268.4px;width:216px;text-align:right;color:#111;font-size:14.6px">$2M Revenue Target</div>
<div class="a rt" style="left:1215px;top:305.1px;width:216px;text-align:right;color:#111;font-size:14.6px">+10pts CSAT</div>
<div class="a rt" style="left:1215px;top:341.9px;width:216px;text-align:right;color:#111;font-size:14.6px">-4.8h avg resolution time</div>
<div class="a rt" style="left:1215px;top:378.6px;width:216px;text-align:right;color:#111;font-size:14.6px">All Apps under IT Self-Service</div>
<div class="a rt" style="left:1215px;top:415.4px;width:216px;text-align:right;color:#111;font-size:14.6px">Automate 200 Routines</div>
<div class="a rt" style="left:1215px;top:452.1px;width:216px;text-align:right;color:#111;font-size:14.6px">Offshore 10 Initiatives</div>
<div class="a rt" style="left:1215px;top:488.8px;width:216px;text-align:right;color:#111;font-size:14.6px">Proactive Monitoring on 3 apps</div>
<div class="a rt" style="left:1215px;top:525.6px;width:216px;text-align:right;color:#111;font-size:14.6px">Save $5M on unused licenses</div>
<svg class="a" style="left:1215px;top:606px" width="603" height="562" viewBox="1215 606 603 562"><line x1="1292" y1="660.7" x2="1805" y2="660.7" stroke="#d4d4d4" stroke-width="1.3"/><line x1="1292" y1="717.5" x2="1805" y2="717.5" stroke="#d4d4d4" stroke-width="1.3"/><line x1="1292" y1="774.2" x2="1805" y2="774.2" stroke="#d4d4d4" stroke-width="1.3"/><line x1="1292" y1="831.0" x2="1805" y2="831.0" stroke="#d4d4d4" stroke-width="1.3"/><line x1="1292" y1="887.8" x2="1805" y2="887.8" stroke="#d4d4d4" stroke-width="1.3"/><line x1="1292" y1="944.5" x2="1805" y2="944.5" stroke="#d4d4d4" stroke-width="1.3"/><line x1="1292" y1="1001.3" x2="1805" y2="1001.3" stroke="#d4d4d4" stroke-width="1.3"/><line x1="1292" y1="1058.0" x2="1805" y2="1058.0" stroke="#d4d4d4" stroke-width="1.3"/><rect x="1298.2" y="786.7" width="17" height="44.3" fill="#77c8bd" stroke="#2f8b7f" stroke-width="1.3"/><rect x="1298.2" y="831" width="17" height="27.5" fill="#ee9797" stroke="#b85a5a" stroke-width="1.2"/><rect x="1330.5" y="785.8" width="17" height="45.2" fill="#77c8bd" stroke="#2f8b7f" stroke-width="1.3"/><rect x="1330.5" y="831" width="17" height="31.0" fill="#ee9797" stroke="#b85a5a" stroke-width="1.2"/><rect x="1362.7" y="785.8" width="17" height="45.2" fill="#77c8bd" stroke="#2f8b7f" stroke-width="1.3"/><rect x="1362.7" y="831" width="17" height="84.8" fill="#ee9797" stroke="#b85a5a" stroke-width="1.2"/><rect x="1395.0" y="785.8" width="17" height="45.2" fill="#77c8bd" stroke="#2f8b7f" stroke-width="1.3"/><rect x="1395.0" y="831" width="17" height="212.3" fill="#ee9797" stroke="#b85a5a" stroke-width="1.2"/><rect x="1427.2" y="751.9" width="17" height="79.1" fill="#77c8bd" stroke="#2f8b7f" stroke-width="1.3"/><rect x="1427.2" y="831" width="17" height="118.4" fill="#ee9797" stroke="#b85a5a" stroke-width="1.2"/><rect x="1459.5" y="750.6" width="17" height="80.4" fill="#77c8bd" stroke="#2f8b7f" stroke-width="1.3"/><rect x="1459.5" y="831" width="17" height="55.0" fill="#ee9797" stroke="#b85a5a" stroke-width="1.2"/><rect x="1491.7" y="750.6" width="17" height="80.4" fill="#77c8bd" stroke="#2f8b7f" stroke-width="1.3"/><rect x="1491.7" y="831" width="17" height="26.2" fill="#ee9797" stroke="#b85a5a" stroke-width="1.2"/><rect x="1524.0" y="750.6" width="17" height="80.4" fill="#77c8bd" stroke="#2f8b7f" stroke-width="1.3"/><rect x="1524.0" y="831" width="17" height="22.6" fill="#ee9797" stroke="#b85a5a" stroke-width="1.2"/><rect x="1556.2" y="717.0" width="17" height="114.0" fill="#77c8bd" stroke="#2f8b7f" stroke-width="1.3"/><rect x="1588.5" y="714.4" width="17" height="116.6" fill="#77c8bd" stroke="#2f8b7f" stroke-width="1.3"/><rect x="1620.7" y="713.1" width="17" height="117.9" fill="#77c8bd" stroke="#2f8b7f" stroke-width="1.3"/><rect x="1653.0" y="713.1" width="17" height="117.9" fill="#77c8bd" stroke="#2f8b7f" stroke-width="1.3"/><rect x="1685.2" y="723.1" width="17" height="107.9" fill="#77c8bd" stroke="#2f8b7f" stroke-width="1.3"/><rect x="1717.5" y="723.1" width="17" height="107.9" fill="#77c8bd" stroke="#2f8b7f" stroke-width="1.3"/><rect x="1749.7" y="721.8" width="17" height="109.2" fill="#77c8bd" stroke="#2f8b7f" stroke-width="1.3"/><rect x="1782.0" y="721.8" width="17" height="109.2" fill="#77c8bd" stroke="#2f8b7f" stroke-width="1.3"/><line x1="1290.5" y1="1137.5" x2="1806" y2="1137.5" stroke="#444" stroke-width="1.5"/><line x1="1290.5" y1="1131" x2="1290.5" y2="1144.5" stroke="#444" stroke-width="1.5"/><line x1="1419.3" y1="1131" x2="1419.3" y2="1144.5" stroke="#444" stroke-width="1.5"/><line x1="1548.2" y1="1131" x2="1548.2" y2="1144.5" stroke="#444" stroke-width="1.5"/><line x1="1677.0" y1="1131" x2="1677.0" y2="1144.5" stroke="#444" stroke-width="1.5"/><line x1="1805.9" y1="1131" x2="1805.9" y2="1144.5" stroke="#444" stroke-width="1.5"/><line x1="1322.7" y1="1133" x2="1322.7" y2="1137.5" stroke="#444" stroke-width="1.2"/><line x1="1354.9" y1="1133" x2="1354.9" y2="1137.5" stroke="#444" stroke-width="1.2"/><line x1="1387.1" y1="1133" x2="1387.1" y2="1137.5" stroke="#444" stroke-width="1.2"/><line x1="1451.5" y1="1133" x2="1451.5" y2="1137.5" stroke="#444" stroke-width="1.2"/><line x1="1483.8" y1="1133" x2="1483.8" y2="1137.5" stroke="#444" stroke-width="1.2"/><line x1="1516.0" y1="1133" x2="1516.0" y2="1137.5" stroke="#444" stroke-width="1.2"/><line x1="1580.4" y1="1133" x2="1580.4" y2="1137.5" stroke="#444" stroke-width="1.2"/><line x1="1612.6" y1="1133" x2="1612.6" y2="1137.5" stroke="#444" stroke-width="1.2"/><line x1="1644.8" y1="1133" x2="1644.8" y2="1137.5" stroke="#444" stroke-width="1.2"/><line x1="1709.2" y1="1133" x2="1709.2" y2="1137.5" stroke="#444" stroke-width="1.2"/><line x1="1741.4" y1="1133" x2="1741.4" y2="1137.5" stroke="#444" stroke-width="1.2"/><line x1="1773.7" y1="1133" x2="1773.7" y2="1137.5" stroke="#444" stroke-width="1.2"/></svg>
<div class="a ax" style="left:1215px;top:649.7px;width:66.5px;text-align:right;color:#444;font-size:14.8px">6&#8201;000</div>
<div class="a" style="left:1286.8px;top:660.2px;width:3.5px;height:2px;background:#555"></div>
<div class="a ax" style="left:1215px;top:706.5px;width:66.5px;text-align:right;color:#444;font-size:14.8px">4&#8201;000</div>
<div class="a" style="left:1286.8px;top:717.0px;width:3.5px;height:2px;background:#555"></div>
<div class="a ax" style="left:1215px;top:763.2px;width:66.5px;text-align:right;color:#444;font-size:14.8px">2&#8201;000</div>
<div class="a" style="left:1286.8px;top:773.7px;width:3.5px;height:2px;background:#555"></div>
<div class="a ax" style="left:1215px;top:820.0px;width:66.5px;text-align:right;color:#444;font-size:14.8px">0</div>
<div class="a" style="left:1286.8px;top:830.5px;width:3.5px;height:2px;background:#555"></div>
<div class="a ax" style="left:1215px;top:876.8px;width:66.5px;text-align:right;color:#444;font-size:14.8px">-2&#8201;000</div>
<div class="a" style="left:1286.8px;top:887.3px;width:3.5px;height:2px;background:#555"></div>
<div class="a ax" style="left:1215px;top:933.5px;width:66.5px;text-align:right;color:#444;font-size:14.8px">-4&#8201;000</div>
<div class="a" style="left:1286.8px;top:944.0px;width:3.5px;height:2px;background:#555"></div>
<div class="a ax" style="left:1215px;top:990.3px;width:66.5px;text-align:right;color:#444;font-size:14.8px">-6&#8201;000</div>
<div class="a" style="left:1286.8px;top:1000.8px;width:3.5px;height:2px;background:#555"></div>
<div class="a ax" style="left:1215px;top:1047.0px;width:66.5px;text-align:right;color:#444;font-size:14.8px">-8&#8201;000</div>
<div class="a" style="left:1286.8px;top:1057.5px;width:3.5px;height:2px;background:#555"></div>
<div class="a ax" style="left:1215px;top:1103.6px;width:66.5px;text-align:right;color:#444;font-size:14.8px">-10&#8201;000</div>
<div class="a" style="left:1286.8px;top:1114.1px;width:3.5px;height:2px;background:#555"></div>
<div class="a ax" style="left:1285.5px;top:1114.5px;width:40px;text-align:center;color:#444">Q1</div>
<div class="a ax" style="left:1317.8px;top:1114.5px;width:40px;text-align:center;color:#444">Q2</div>
<div class="a ax" style="left:1350.0px;top:1114.5px;width:40px;text-align:center;color:#444">Q3</div>
<div class="a ax" style="left:1382.2px;top:1114.5px;width:40px;text-align:center;color:#444">Q4</div>
<div class="a ax" style="left:1414.5px;top:1114.5px;width:40px;text-align:center;color:#444">Q1</div>
<div class="a ax" style="left:1446.8px;top:1114.5px;width:40px;text-align:center;color:#444">Q2</div>
<div class="a ax" style="left:1479.0px;top:1114.5px;width:40px;text-align:center;color:#444">Q3</div>
<div class="a ax" style="left:1511.2px;top:1114.5px;width:40px;text-align:center;color:#444">Q4</div>
<div class="a ax" style="left:1543.5px;top:1114.5px;width:40px;text-align:center;color:#444">Q1</div>
<div class="a ax" style="left:1575.8px;top:1114.5px;width:40px;text-align:center;color:#444">Q2</div>
<div class="a ax" style="left:1608.0px;top:1114.5px;width:40px;text-align:center;color:#444">Q3</div>
<div class="a ax" style="left:1640.2px;top:1114.5px;width:40px;text-align:center;color:#444">Q4</div>
<div class="a ax" style="left:1672.5px;top:1114.5px;width:40px;text-align:center;color:#444">Q1</div>
<div class="a ax" style="left:1704.8px;top:1114.5px;width:40px;text-align:center;color:#444">Q2</div>
<div class="a ax" style="left:1737.0px;top:1114.5px;width:40px;text-align:center;color:#444">Q3</div>
<div class="a ax" style="left:1769.2px;top:1114.5px;width:40px;text-align:center;color:#444">Q4</div>
<div class="a ax" style="left:1324.1px;top:1133px;width:60px;text-align:center;color:#444">2025</div>
<div class="a ax" style="left:1453.0px;top:1133px;width:60px;text-align:center;color:#444">2026</div>
<div class="a ax" style="left:1581.8px;top:1133px;width:60px;text-align:center;color:#444">2027</div>
<div class="a ax" style="left:1710.7px;top:1133px;width:60px;text-align:center;color:#444">2028</div>
<svg class="a" style="left:0;top:0" width="69" height="1199"><path d="M25.5,121.5 V103.5 L37.5,94.5 L49.5,103.5 V121.5 H42.5 V110 H32.5 V121.5 Z" fill="none" stroke="#fff" stroke-width="3" stroke-linejoin="miter"/><circle cx="38" cy="173.6" r="9.6" fill="none" stroke="#fff" stroke-width="3"/><path d="M32,180 H44 V188.5 Q44,190.3 42.2,190.9 L38,193.2 L33.8,190.9 Q32,190.3 32,188.5 Z" fill="#fff"/><path d="M35,184.7 H41 M35,187.5 H41" stroke="#243142" stroke-width="1.1"/><path d="M34.3,172 L38,175.8 L41.7,172 M38,175.8 V181" fill="none" stroke="#fff" stroke-width="2.3"/><path d="M35,252 H30 V237.6 H45.2 V245" fill="none" stroke="#fff" stroke-width="2.1"/><line x1="30" y1="241.3" x2="45.2" y2="241.3" stroke="#fff" stroke-width="2"/><path d="M32.5,234.5 V238 M42,234.5 V238" stroke="#fff" stroke-width="1.9"/><rect x="32.8" y="244" width="1.5" height="2" fill="#fff"/><rect x="35.8" y="244" width="2.2" height="1" fill="#fff"/><rect x="32.8" y="248" width="1.5" height="1.6" fill="#fff"/><circle cx="41" cy="249.8" r="2.5" fill="none" stroke="#fff" stroke-width="2.4"/><path d="M33.7,261.3 Q34,254.4 41,254.4 Q48,254.4 48.3,261.3 Z" fill="#fff"/><path d="M36,258.6 Q37.5,257 41,257 Q44.5,257 46,258.6" fill="none" stroke="#243142" stroke-width="0.9"/><rect x="24" y="309" width="28.5" height="22" rx="2.5" fill="none" stroke="#fff" stroke-width="2.8"/><path d="M32.5,309 V304.5 H43.5 V309" fill="none" stroke="#fff" stroke-width="2.6"/><line x1="24" y1="319.5" x2="52" y2="319.5" stroke="#fff" stroke-width="2.4"/><rect x="34.5" y="316" width="7" height="7" fill="#243142" stroke="#fff" stroke-width="2.4"/><rect x="11" y="361" width="53" height="53" rx="10" fill="#fdc01b"/><g fill="none" stroke="#3e4150" stroke-width="2.2" stroke-linejoin="round"><path d="M30,376.3 Q34,380.3 38,376.3 Q42,380.3 45.8,376.3 L44,386.5 L45.3,393.5 M30,376.3 L32,386.5 L30.7,393.5 M28.6,386.6 H47.4"/><rect x="28.8" y="394.2" width="18.6" height="5"/></g><circle cx="33.8" cy="452.3" r="4.2" fill="none" stroke="#fff" stroke-width="2.8"/><path d="M23,469 V464.5 Q23.5,459.2 34,459.2 Q44.5,459.2 45,464.5 V469 Z" fill="#fff"/><path d="M26,466 Q27.5,462.3 34,462.3 Q40.5,462.3 42,466 Z" fill="#243142"/><path d="M40,447.1 A5.5,5.5 0 0 1 40,458.1 Q43.6,452.6 40,447.1 Z" fill="#fff"/><path d="M45.8,459.3 Q53,460.5 53,466.5 V469 H47.3 V466 Q47.3,462 45.8,459.3 Z" fill="#fff"/><path d="M25,538 V518.5 Q25,517 26.5,517 H34.5 L37.5,520 H51 Q52,520 52,521.5 V538 Q52,539 51,539 H26.5 Q25,539 25,538 Z" fill="none" stroke="#fff" stroke-width="2.6"/><path d="M40,524 L35.5,530 H39.5 L37,536 L42,529.5 H38.5 Z" fill="none" stroke="#fff" stroke-width="1.2"/><path d="M25,605.5 V588.5 Q25,587 26.5,587 H34 L37,590 H50.5" fill="none" stroke="#fff" stroke-width="2.6"/><path d="M26.5,607 L29.5,595.5 H52.5 L49.5,605.5 Q49,607 47.5,607 Z" fill="none" stroke="#fff" stroke-width="2.6" stroke-linejoin="round"/><path d="M38.84,656.03 A12,12 0 0 1 48.96,672.88" fill="none" stroke="#fff" stroke-width="5"/><path d="M48.29,674.18 A12,12 0 1 1 37.16,656.03" fill="none" stroke="#fff" stroke-width="5"/><g fill="none" stroke="#fff" stroke-linejoin="round" stroke-linecap="round"><path d="M26,734.5 V748.5 Q26,750.3 28,750.3 H42 Q43.8,750.3 43.8,748.5 V735.5 Q43.8,734 42,734 H38.5" stroke-width="2.2"/><path d="M39.5,730.5 L45,728.8 L51,743 L46.5,745.8" stroke-width="1.9"/><path d="M25.3,727 L32.2,723.8 M28,726.5 L29.3,735 L36.3,731 L32.2,724.8 M33.2,733 L35.3,737" stroke-width="1.9"/><path d="M28.3,738.5 H32.5 M28.3,742.3 H32.5 M28.3,746 H32.5" stroke-width="1.9"/><path d="M35.3,742.3 L37.3,744.5 L41.3,739.7" stroke-width="1.9"/></g><g fill="#fff"><circle cx="30.0" cy="800.0" r="5.5"/><rect x="28.1" y="793.6" width="3.8" height="2.9" transform="rotate(0.0 30.0 800.0)"/><rect x="28.1" y="793.6" width="3.8" height="2.9" transform="rotate(60.0 30.0 800.0)"/><rect x="28.1" y="793.6" width="3.8" height="2.9" transform="rotate(120.0 30.0 800.0)"/><rect x="28.1" y="793.6" width="3.8" height="2.9" transform="rotate(180.0 30.0 800.0)"/><rect x="28.1" y="793.6" width="3.8" height="2.9" transform="rotate(240.0 30.0 800.0)"/><rect x="28.1" y="793.6" width="3.8" height="2.9" transform="rotate(300.0 30.0 800.0)"/></g><circle cx="30.0" cy="800.0" r="2.8" fill="#243142"/><g fill="#fff"><circle cx="43.3" cy="813.0" r="7.9"/><rect x="40.7" y="803.9" width="5.2" height="3.2" transform="rotate(0.0 43.3 813.0)"/><rect x="40.7" y="803.9" width="5.2" height="3.2" transform="rotate(60.0 43.3 813.0)"/><rect x="40.7" y="803.9" width="5.2" height="3.2" transform="rotate(120.0 43.3 813.0)"/><rect x="40.7" y="803.9" width="5.2" height="3.2" transform="rotate(180.0 43.3 813.0)"/><rect x="40.7" y="803.9" width="5.2" height="3.2" transform="rotate(240.0 43.3 813.0)"/><rect x="40.7" y="803.9" width="5.2" height="3.2" transform="rotate(300.0 43.3 813.0)"/></g><circle cx="43.3" cy="813.0" r="4.1" fill="#243142"/><g fill="none" stroke="#fff" stroke-width="2.5" stroke-linecap="round" stroke-linejoin="round"><path d="M23.8,875.8 L31.2,868 Q34,865.3 36.8,868 L40.8,872.2 Q42.4,874.2 40.4,875.8 Q38.6,877.2 36.8,875.7 L34.2,873.3"/><path d="M40.3,866.6 Q43,864.4 45.6,867 L51,873 Q53,875 51,877 L39.5,888.5 Q37.5,890.5 35.5,888.5 L27,880 Q25.8,878.8 27,877.6 L33.5,871.2"/><path d="M29.5,881.5 L34.5,876.5 M32.3,884.3 L37,879.6 M35,887 L39.3,882.7"/></g><rect x="28" y="1148" width="21" height="21" rx="3" fill="none" stroke="#fff" stroke-width="2.4"/><path d="M38.5,1152 V1165 M32,1158.5 H45" stroke="#fff" stroke-width="2.4"/></svg>
<div class="a" style="left:25px;top:133.4px;width:25px;height:2.6px;background:#f39c34"></div>
<div class="a" style="left:25px;top:203.4px;width:25px;height:2.6px;background:#5bc8e8"></div>
<div class="a" style="left:25px;top:273.4px;width:25px;height:2.6px;background:#18c5d8"></div>
<div class="a" style="left:25px;top:343.4px;width:25px;height:2.6px;background:#7a4fd8"></div>
<div class="a" style="left:25px;top:483.4px;width:25px;height:2.6px;background:#f0603a"></div>
<div class="a" style="left:25px;top:553.7px;width:25px;height:2.6px;background:#6fcfc0"></div>
<div class="a" style="left:25px;top:623.7px;width:25px;height:2.6px;background:#ee2a5a"></div>
<div class="a" style="left:25px;top:693.7px;width:25px;height:2.6px;background:#4fc0f0"></div>
<div class="a" style="left:25px;top:763.7px;width:25px;height:2.6px;background:#c0e830"></div>
<div class="a" style="left:25px;top:833.7px;width:25px;height:2.6px;background:#a070c8"></div>
<div class="a" style="left:25px;top:903.7px;width:25px;height:2.6px;background:#5bc8e8"></div>
<div class="a" style="left:25px;top:1183.7px;width:25px;height:2.6px;background:#bbbbbb"></div>
<div class="a" style="left:1856px;top:86px;width:48px;height:670px;background:#fff;border-radius:24px;box-shadow:0 0 4px rgba(80,80,110,.35)"></div>
<svg class="a" style="left:0;top:0" width="1919" height="1199"><g stroke="#6b6f9a" stroke-width="2.4"><path d="M1874.8,124 V135.5 M1874.8,142 V146.5 M1870,139.8 H1879.5 M1887.2,124 V128 M1887.2,134 V146.5 M1882.5,130 H1892"/></g><line x1="1863" y1="170.5" x2="1901.5" y2="170.5" stroke="#e0e0e0" stroke-width="1"/><path d="M1869,194 H1888.5 L1895,200.5 V219.5 Q1895,221.5 1893,221.5 H1869 Q1867,221.5 1867,219.5 V196 Q1867,194 1869,194 Z" fill="#c6c6c6"/><rect x="1870" y="197" width="15.5" height="6.5" fill="#fff"/><circle cx="1880.8" cy="213.5" r="4.6" fill="#fff"/><path d="M1866.7,250.5 Q1873,248.5 1880,251.5 V270.5 Q1873,268 1866.7,270 Z" fill="#6b6f9a"/><path d="M1882.5,251.5 Q1888,248.5 1894.3,250.3 V269.5 Q1888,268 1882.5,270.5 Z" fill="none" stroke="#6b6f9a" stroke-width="2"/><g stroke="#6b6f9a" stroke-width="1.5" fill="none"><path d="M1885,256 Q1888,255 1891.5,255.5 M1885,259.8 Q1888,258.8 1891.5,259.3 M1885,263.6 Q1888,262.6 1891.5,263.1"/></g><circle cx="1881" cy="299.5" r="3.2" fill="#6b6f9a"/><rect x="1870.5" y="300.5" width="21" height="20" rx="4" fill="#6b6f9a"/><circle cx="1869.5" cy="308.5" r="2.8" fill="#6b6f9a"/><circle cx="1892.5" cy="308.5" r="2.8" fill="#6b6f9a"/><circle cx="1877" cy="308.5" r="2.1" fill="#fff"/><circle cx="1885" cy="308.5" r="2.1" fill="#fff"/><rect x="1876" y="314" width="10" height="2.2" fill="#fff"/><path d="M1868.3,347 L1894.8,358.5 L1868.3,370 V362.3 L1885,358.5 L1868.3,354.7 Z" fill="#6b6f9a"/><rect x="1869.5" y="396.5" width="22.7" height="16" rx="2" fill="none" stroke="#6b6f9a" stroke-width="2.3"/><rect x="1876" y="413" width="10.5" height="3.7" fill="#6b6f9a"/><g stroke="#6b6f9a" stroke-width="1.5"><path d="M1873.5,402.5 H1888.5 M1886,400 V405 M1873.5,407 H1888.5 M1876,404.5 V409.5"/></g><line x1="1863" y1="441.5" x2="1901.5" y2="441.5" stroke="#e0e0e0" stroke-width="1"/><path d="M1868.3,473.3 V488.5 H1889" fill="none" stroke="#6b6f9a" stroke-width="2.2"/><rect x="1873.2" y="462.5" width="21.1" height="21.1" rx="2" fill="#6b6f9a"/><text x="1884" y="477.5" font-family="Liberation Sans" font-size="9.5" font-weight="bold" fill="#fff" text-anchor="middle">PDF</text><circle cx="1871.0" cy="464.0" r="7.2" fill="#c9c9c9" stroke="#fff" stroke-width="1.2"/><path d="M1867.8,462.6 L1871.0,465.6 L1874.2,462.6" fill="none" stroke="#555" stroke-width="1.6"/><path d="M1867.8,513 L1883,506.4 V531.3 L1867.8,529 Z" fill="#6b6f9a"/><text x="1874.5" y="525" font-family="Liberation Sans" font-size="10" font-weight="bold" fill="#fff" text-anchor="middle">X</text><rect x="1883.5" y="509.5" width="10.3" height="18.6" fill="none" stroke="#6b6f9a" stroke-width="1.5"/><g stroke="#6b6f9a" stroke-width="1.3"><path d="M1883.5,514 H1893.8 M1883.5,518.7 H1893.8 M1883.5,523.4 H1893.8 M1888.7,509.5 V528"/></g><circle cx="1871.0" cy="506.0" r="7.2" fill="#c9c9c9" stroke="#fff" stroke-width="1.2"/><path d="M1867.8,504.6 L1871.0,507.6 L1874.2,504.6" fill="none" stroke="#555" stroke-width="1.6"/><circle cx="1881" cy="560.6" r="14" fill="#6b6f9a"/><text x="1881" y="568" font-family="Liberation Sans" font-size="21" font-weight="bold" fill="#fff" text-anchor="middle">$</text><rect x="1869.4" y="593.6" width="23.3" height="23.3" rx="2.2" fill="none" stroke="#6b6f9a" stroke-width="2.3"/><rect x="1869" y="593" width="24" height="5" rx="1.5" fill="#6b6f9a"/><rect x="1887" y="589.5" width="2.5" height="4" fill="#6b6f9a"/><g fill="#6b6f9a"><rect x="1873.3" y="602.6" width="2.8" height="2.8"/><rect x="1879.3" y="602.6" width="2.8" height="2.8"/><rect x="1885.3" y="602.6" width="2.8" height="2.8"/></g><circle cx="1871.0" cy="591.0" r="7.2" fill="#c9c9c9" stroke="#fff" stroke-width="1.2"/><path d="M1867.8,589.6 L1871.0,592.6 L1874.2,589.6" fill="none" stroke="#555" stroke-width="1.6"/><path d="M1866.1,638 L1883.5,631.5 V659.7 L1866.1,657 Z" fill="#6b6f9a"/><text x="1874" y="650.5" font-family="Liberation Sans" font-size="10" font-weight="bold" fill="#fff" text-anchor="middle">P</text><rect x="1884" y="637.5" width="11.5" height="16" fill="none" stroke="#6b6f9a" stroke-width="1.2"/><rect x="1884.5" y="639" width="9.5" height="13" fill="#6b6f9a"/><path d="M1886,641 H1892 V647 H1886 Z" fill="#fff"/><rect x="1886" y="648.5" width="6.5" height="1.6" fill="#fff"/><circle cx="1871.0" cy="633.7" r="7.2" fill="#c9c9c9" stroke="#fff" stroke-width="1.2"/><path d="M1867.8,632.3 L1871.0,635.3 L1874.2,632.3" fill="none" stroke="#555" stroke-width="1.6"/><path d="M1879.1,678.2 H1893.2 V685.5 M1867.8,687.4 V696 H1879.7" fill="none" stroke="#6b6f9a" stroke-width="2.3"/><g fill="#6b6f9a"><circle cx="1888.9" cy="694.0" r="5.0"/><rect x="1887.4" y="687.8" width="3.0" height="3.2" transform="rotate(0.0 1888.9 694.0)"/><rect x="1887.4" y="687.8" width="3.0" height="3.2" transform="rotate(45.0 1888.9 694.0)"/><rect x="1887.4" y="687.8" width="3.0" height="3.2" transform="rotate(90.0 1888.9 694.0)"/><rect x="1887.4" y="687.8" width="3.0" height="3.2" transform="rotate(135.0 1888.9 694.0)"/><rect x="1887.4" y="687.8" width="3.0" height="3.2" transform="rotate(180.0 1888.9 694.0)"/><rect x="1887.4" y="687.8" width="3.0" height="3.2" transform="rotate(225.0 1888.9 694.0)"/><rect x="1887.4" y="687.8" width="3.0" height="3.2" transform="rotate(270.0 1888.9 694.0)"/><rect x="1887.4" y="687.8" width="3.0" height="3.2" transform="rotate(315.0 1888.9 694.0)"/></g><circle cx="1888.9" cy="694.0" r="2.2" fill="#fff"/><circle cx="1869.9" cy="677.6" r="7.5" fill="#c9c9c9" stroke="#fff" stroke-width="1.2"/><path d="M1866.3,674.3 L1869.9,672.8 L1873.5,674.3 V677.8 Q1873.5,681 1869.9,682.7 Q1866.3,681 1866.3,677.8 Z" fill="#555"/></svg>
<div class="a" style="left:1860px;top:1148px;width:44px;height:44px;border-radius:50%;background:#6b77d9"></div>
<svg class="a" style="left:1860px;top:1148px" width="44" height="44"><g fill="none" stroke="#fff" stroke-width="2.4"><path d="M11,18 V11 H18 M26,11 H33 V18 M33,26 V33 H26 M18,33 H11 V26"/></g></svg>
</body></html>
